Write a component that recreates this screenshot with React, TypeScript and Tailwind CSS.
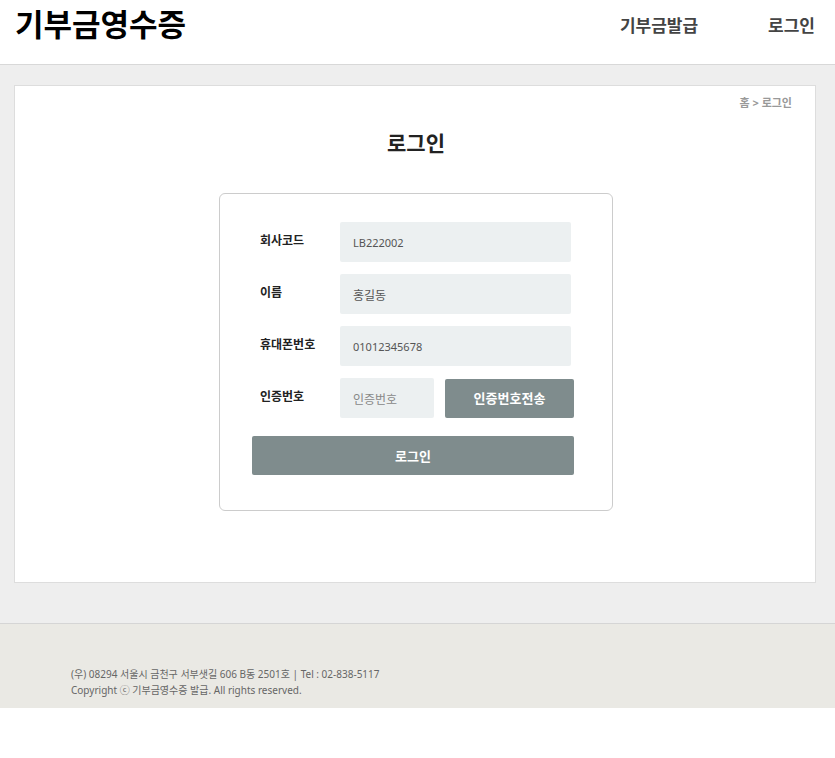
import { useState } from 'react';

type FieldProps = {
  id: string;
  label: string;
  value: string;
  onChange: (value: string) => void;
  type?: string;
  textClass?: string;
};

function Field({ id, label, value, onChange, type = 'text', textClass = 'pt-0.5 text-[12px]' }: FieldProps) {
  return (
    <div className="flex">
      <label htmlFor={id} className="w-20 shrink-0 pt-[9px] text-[12px] leading-5 font-bold text-[#222]">
        {label}
      </label>
      <input
        id={id}
        type={type}
        value={value}
        onChange={(e) => onChange(e.target.value)}
        className={`mr-[3px] h-10 min-w-0 flex-1 rounded-xs bg-[#ecf0f1] px-[13px] text-[#555] outline-none ${textClass}`}
      />
    </div>
  );
}

export default function App() {
  const [formData, setFormData] = useState({
    company: 'LB222002',
    name: '홍길동',
    phone: '01012345678',
    code: '',
  });

  return (
    <div className="bg-white font-['Noto_Sans','Noto_Sans_CJK_KR',sans-serif]">
      <header className="flex h-[65px] justify-between border-b border-[#d8d8d8] pr-5 pl-[15px]">
        <h1 className="pt-1 text-[31px] leading-10 font-bold text-black">
          <a href="#">기부금영수증</a>
        </h1>
        <nav className="flex gap-[70px] pt-3.5 text-[17px] leading-6 font-bold text-[#444]">
          <a href="#">기부금발급</a>
          <a href="#">로그인</a>
        </nav>
      </header>

      <main className="bg-[#eee] pt-5 pr-[19px] pb-10 pl-3.5">
        <section className="border border-[#ddd] bg-white pt-[9px] pr-[23px] pb-[71px] pl-[25px]">
          {/* 현재 위치 */}
          <p className="text-right text-[11px] leading-4 font-bold text-[#999]">
            <a href="#">홈</a> &gt; <a href="#">로그인</a>
          </p>
          <h2 className="mt-4 text-center text-[21px] leading-8 font-bold text-[#222]">로그인</h2>

          <form
            onSubmit={(e) => e.preventDefault()}
            className="mx-auto mt-[34px] max-w-[394px] rounded-md border border-[#ccc] pt-7 pr-[38px] pb-[35px] pl-8"
          >
            <div className="flex flex-col gap-3 pl-2">
              <Field
                id="company"
                label="회사코드"
                value={formData.company}
                onChange={(company) => setFormData({ ...formData, company })}
                textClass="text-[11px]"
              />
              <Field
                id="name"
                label="이름"
                value={formData.name}
                onChange={(name) => setFormData({ ...formData, name })}
              />
              <Field
                id="phone"
                type="tel"
                label="휴대폰번호"
                value={formData.phone}
                onChange={(phone) => setFormData({ ...formData, phone })}
                textClass="text-[11px]"
              />
              <div className="flex">
                <label htmlFor="code" className="w-20 shrink-0 pt-[9px] text-[12px] leading-5 font-bold text-[#222]">
                  인증번호
                </label>
                <input
                  id="code"
                  placeholder="인증번호"
                  value={formData.code}
                  onChange={(e) => setFormData({ ...formData, code: e.target.value })}
                  className="h-10 min-w-0 flex-1 rounded-xs bg-[#ecf0f1] px-[13px] pt-0.5 text-[12px] text-[#555] outline-none placeholder:text-[#888]"
                />
                <button
                  type="button"
                  className="ml-[11px] h-[39px] w-[129px] self-center rounded-xs bg-[#7f8c8d] pt-0.5 text-[13px] font-bold text-white"
                >
                  인증번호전송
                </button>
              </div>
            </div>
            <button
              type="submit"
              className="mt-[18px] h-[39px] w-full rounded-xs bg-[#7f8c8d] pt-0.5 text-[13px] font-bold text-white"
            >
              로그인
            </button>
          </form>
        </section>
      </main>

      <footer className="border-t border-[#d5d5d5] bg-[#eae9e4] px-[71px] pt-[42px] pb-2.5 text-[10px] leading-4 text-[#666]">
        <p>(우) 08294 서울시 금천구 서부샛길 606 B동 2501호 | Tel : 02-838-5117</p>
        <p>Copyright ⓒ 기부금영수증 발급. All rights reserved.</p>
      </footer>
    </div>
  );
}
